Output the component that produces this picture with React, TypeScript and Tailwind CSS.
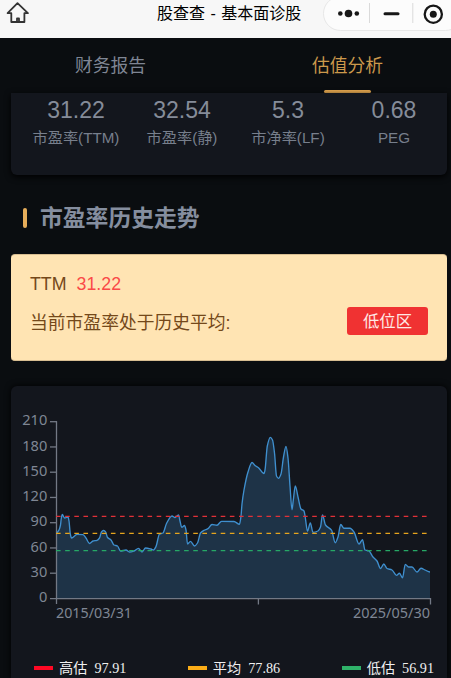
const cjk = "font-['Liberation_Sans','Noto_Sans_CJK_SC',sans-serif]";

const stats = [
  { value: '31.22', label: '市盈率(TTM)' },
  { value: '32.54', label: '市盈率(静)' },
  { value: '5.3', label: '市净率(LF)' },
  { value: '0.68', label: 'PEG' },
];

const legend = [
  { name: '高估', value: '97.91', color: 'bg-[#ff0824]' },
  { name: '平均', value: '77.86', color: 'bg-[#fbad17]' },
  { name: '低估', value: '56.91', color: 'bg-[#2fb269]' },
];

const series: [number, number][] = [
  [56.5, 533], [59, 530], [60.5, 525], [61.2, 519], [62.3, 514.5], [64.5, 518], [68, 517], [69, 521], [70.3, 534], [71.5, 538],
  [77, 534.4], [83, 534.6], [86, 538], [89.5, 543.5], [93, 541], [97, 540.3], [99.5, 538], [101.5, 532], [103.3, 530.5], [105.5, 531.7],
  [107.5, 537.5], [111, 540], [114, 545], [117.5, 546], [120.5, 551], [126, 550], [129.5, 552], [134, 551], [138.5, 548.3], [142, 552], [145.5, 548],
  [151, 549], [153.5, 550], [156, 546.5], [159.5, 534], [163, 533], [166.5, 523.5], [172, 516], [175, 517.5], [178.5, 514.8], [180, 521],
  [181.7, 527.3], [184.5, 525.5], [186, 530], [187.5, 544], [190.5, 541.3], [194.5, 546], [197.5, 543], [200.5, 533], [204, 530.3], [208, 528.7],
  [212, 524.5], [217, 525.2], [221.5, 521.3], [234, 521.5], [239.5, 524.3], [241, 516], [242, 504], [244, 490], [248, 472], [252, 462.5],
  [255, 465.5], [258.5, 467.7], [264, 473.5], [265, 470], [267.3, 446], [270.3, 437.3], [272.5, 440], [274.5, 453], [276.5, 476], [278.5, 478.3],
  [281, 474], [283.5, 457], [286, 446.3], [288, 458], [290, 486], [292, 509.8], [293.3, 500], [295.3, 486], [298, 497], [301, 509], [304, 511],
  [305.2, 517], [307.5, 531.2], [310.3, 523], [313, 532.3], [318, 531], [320.5, 527], [322.5, 515], [325.5, 525], [331.5, 530.2], [335.3, 542.7],
  [338, 537], [340.7, 524.5], [344, 528.2], [350, 528.2], [354, 532], [359, 544], [362.5, 539.7], [365, 550], [369, 551], [373, 557], [377, 561],
  [380.5, 568.5], [383.8, 564], [387, 568.5], [392, 570], [396.5, 575.3], [399.5, 573.2], [402.5, 577.8], [405.3, 564.3], [408.5, 567], [412, 567],
  [417, 572], [421, 568.2], [425, 570], [430, 572],
];

// Smooth curve whose tangents flatten at local extremes.
function smooth(points: [number, number][]) {
  const slope = (i: number) => {
    if (i === 0 || i === points.length - 1) return 0;
    const a = (points[i][1] - points[i - 1][1]) / (points[i][0] - points[i - 1][0]);
    const b = (points[i + 1][1] - points[i][1]) / (points[i + 1][0] - points[i][0]);
    return a * b <= 0 ? 0 : (2 * a * b) / (a + b);
  };
  return points.slice(1).reduce((d, [x, y], k) => {
    const [px, py] = points[k];
    const h = (x - px) / 3;
    return `${d}C${px + h} ${py + h * slope(k)} ${x - h} ${y - h * slope(k + 1)} ${x} ${y}`;
  }, `M${points[0][0]} ${points[0][1]}`);
}

function HomeIcon() {
  return (
    <svg className="-mt-[12px] h-6 w-6" viewBox="0 0 24 24" fill="none" stroke="#333" strokeWidth="1.8" strokeLinejoin="round">
      <path d="M12.5 2.2 2.6 12.2H6.3V21H19.4V12.2H22.9Z" />
      <path d="M12 20.5V17.5H14V20.5" />
    </svg>
  );
}

function Capsule() {
  return (
    <div className="-mr-3 flex h-[35px] w-[140px] shrink-0 self-start -mt-1 rounded-full border border-[#e7e7e7] bg-[#fcfcfc]">
      <svg className="h-[33px] w-[138px]" viewBox="324 -3 138 33" fill="#171717">
        <circle cx="340.3" cy="13.5" r="2.3" />
        <circle cx="348.5" cy="13.5" r="3.8" />
        <circle cx="356.8" cy="13.5" r="2.3" />
        <path d="M369.5 3V23M412.8 3V23" stroke="#dadada" />
        <path d="M385 13.8H398" stroke="#171717" strokeWidth="3" strokeLinecap="round" />
        <circle cx="433.3" cy="14.2" r="8.6" fill="none" stroke="#171717" strokeWidth="2.3" />
        <circle cx="433.3" cy="14.2" r="3.5" />
      </svg>
    </div>
  );
}

function Chart() {
  const line = smooth(series);
  return (
    <svg className="block h-[250px] w-[436px]" viewBox="11 386 436 250">
      <g className="font-['Noto_Sans',sans-serif] text-[14.6px]" fill="#7f8694" textAnchor="end">
        {[210, 180, 150, 120, 90, 60, 30, 0].map((v, i) => (
          <text key={v} x="47.3" y={425.3 + i * 25.25}>{v}</text>
        ))}
        <text x="56" y="618" textAnchor="start" textLength="76" lengthAdjust="spacingAndGlyphs">2015/03/31</text>
        <text x="430" y="618" textLength="77" lengthAdjust="spacingAndGlyphs">2025/05/30</text>
      </g>
      <path d={`${line}V598.5H56.5Z`} fill="#1e3347" />
      <g stroke="#737985" strokeWidth="1.3" fill="none">
        <path d="M56.5 421.3V604M50 598.6H431M258.4 599V604.5M430.5 598V604.5" />
        {[0, 1, 2, 3, 4, 5, 6].map((i) => (
          <path key={i} d={`M50 ${421.7 + i * 25.25}H57`} />
        ))}
      </g>
      <path d={line} fill="none" stroke="#3f8fce" strokeWidth="1.35" />
      <g strokeWidth="1.25" strokeDasharray="4.6 4.55">
        <path d="M56 516.4H429" stroke="#e23138" />
        <path d="M56 533.4H429" stroke="#e6a51e" />
        <path d="M56 550.5H429" stroke="#26a866" />
      </g>
    </svg>
  );
}

export default function App() {
  return (
    <div className={`flex h-[678px] w-[451px] flex-col overflow-hidden bg-[#0a0d10] ${cjk}`}>
      <header className="flex h-[38px] shrink-0 items-center bg-[#f7f7f7]">
        <div className="ml-[5px] w-[152px]">
          <HomeIcon />
        </div>
        <h1 className="-mt-[10px] w-[166px] whitespace-nowrap text-base [word-spacing:1px] text-black">股查查 - 基本面诊股</h1>
        <Capsule />
      </header>

      <nav className="flex h-[55px] shrink-0 text-[17.8px] leading-[26px]">
        <div className="flex w-[221px] shrink-0 justify-center pt-[15px] text-[#7f8694]">财务报告</div>
        <div className="flex w-[253px] shrink-0 flex-col items-center pt-[15px] text-[#cc994c]">
          估值分析
          <span className="mt-[11px] h-[3px] w-[47px] shrink-0 rounded-sm bg-[#e6a951]" />
        </div>
      </nav>

      <main className="ml-[11px] flex w-[436px] flex-col">
        <section className="grid h-[82px] shrink-0 grid-cols-[106px_106px_106px_106px] rounded-b-md bg-[#13161d] pl-3 text-center text-[#858c99] shadow-[0_2px_6px_#000]">
          {stats.map((s) => (
            <div key={s.label} className="pt-[4px]">
              <div className="text-[23px] leading-[26px]">{s.value}</div>
              <div className="mt-[3px] whitespace-nowrap text-[15.2px] leading-6 text-[#777f8c]">{s.label}</div>
            </div>
          ))}
        </section>

        <h2 className="mt-[29px] ml-3 flex h-7 shrink-0 items-center text-[22.8px] font-bold text-[#858e9f]">
          <span className="mr-[13px] h-5 w-1 rounded-sm bg-[#e6ad5a]" />
          <span className="pt-px">市盈率历史走势</span>
        </h2>

        <section className="mt-[22px] h-[107px] shrink-0 rounded border-y border-[#d7bd91] bg-[#ffe4b3] px-[19px] pt-[16px] text-[17.8px] text-[#74481a]">
          <div className="flex gap-[10px] leading-[26px]">
            <span>TTM</span>
            <span className="text-[#fa4a48]">31.22</span>
          </div>
          <div className="mt-[10px] flex h-7 items-center justify-between">
            <span className="pt-[3px] leading-[26px]">当前市盈率处于历史平均:</span>
            <span className="flex h-7 w-[81px] items-center justify-center rounded-[3px] bg-[#f03232] text-[16.4px] text-[#ffe9e5]">低位区</span>
          </div>
        </section>

        <section className="mt-[25px] h-[292px] shrink-0 rounded-t-md bg-[#13161d] shadow-[0_0_6px_#000]">
          <Chart />
          <div className="mt-[21px] ml-[23px] flex w-[400px] justify-between font-['Liberation_Serif','Noto_Sans_CJK_SC',serif] text-[14.2px] leading-[22px] text-[#f0f0f0]">
            {legend.map((l) => (
              <div key={l.name} className="flex items-center">
                <span className={`mr-[6px] h-1 w-[19px] ${l.color}`} />
                <span className="mr-[7px]">{l.name}</span>
                <span>{l.value}</span>
              </div>
            ))}
          </div>
        </section>
      </main>
    </div>
  );
}
